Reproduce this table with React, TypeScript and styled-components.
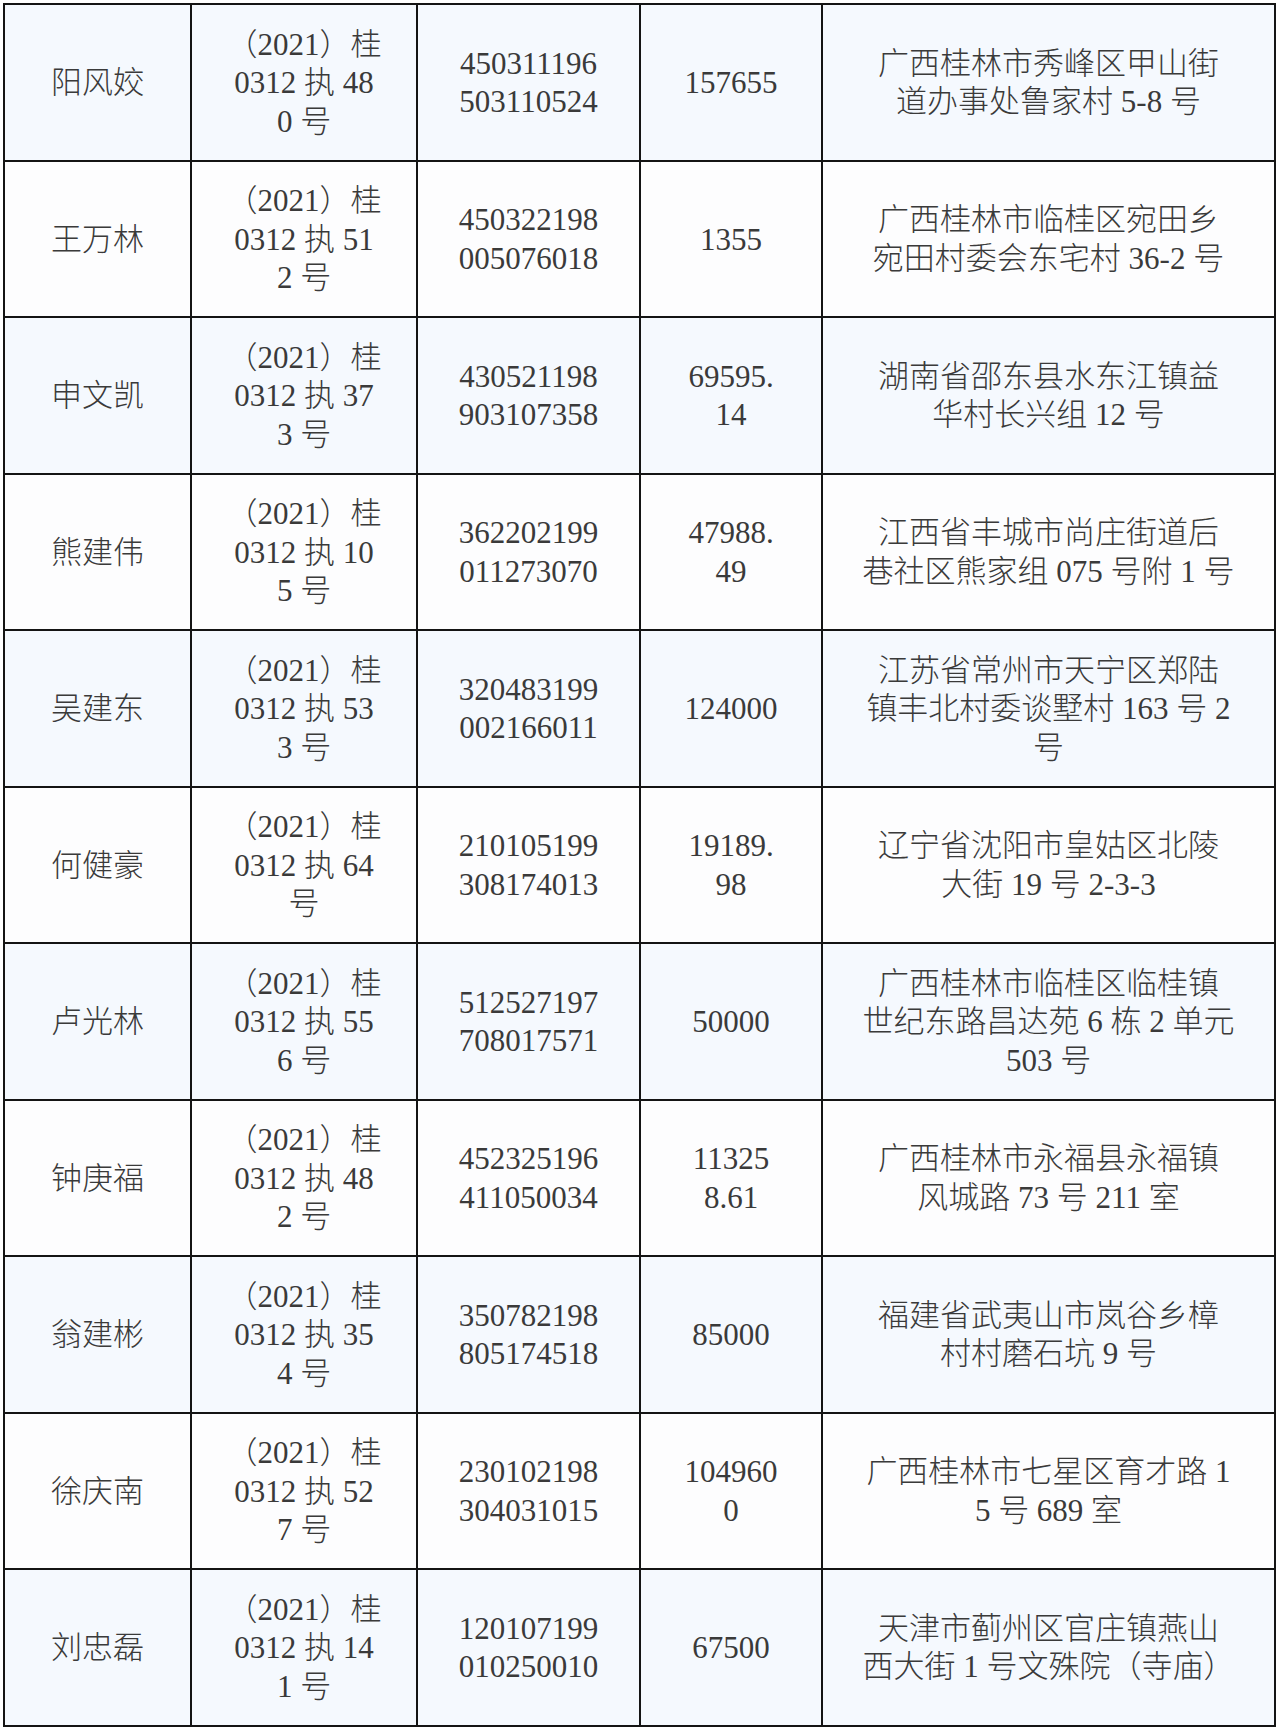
import React from "react";
import styled, { createGlobalStyle } from "styled-components";

const GlobalStyle = createGlobalStyle`
  html, body {
    margin: 0;
    padding: 0;
    background: #ffffff;
  }
  body {
    font-family: "Liberation Serif", "Noto Sans CJK SC", serif;
  }
`;

const Page = styled.div`
  padding: 3px 0 0 3px;
`;

const Table = styled.table`
  border-collapse: collapse;
  table-layout: fixed;
  width: 1273px;
  font-family: "Liberation Serif", "Noto Sans CJK SC", serif;
  font-size: 31px;
  font-weight: 300;
  line-height: 38.5px;
  color: #3a3a3a;
`;

const Col = styled.col<{ $w: number }>`
  width: ${(p) => p.$w}px;
`;

const Row = styled.tr<{ $alt: boolean }>`
  height: 156.5px;
  background: ${(p) => (p.$alt ? "#f5f9fe" : "#fdfdfe")};
`;

const Cell = styled.td`
  border: 2px solid #141414;
  text-align: center;
  vertical-align: middle;
  padding: 2px 0 0 0;
  white-space: nowrap;
`;

const Line = styled.div`
  display: block;
`;

type Entry = {
  name: string;
  caseNo: string[];
  id: string[];
  amount: string[];
  addr: string[];
};

const columns = [187, 226, 223, 182, 453];

const data: Entry[] = [
  {
    name: "阳风姣",
    caseNo: ["（2021）桂", "0312 执 48", "0 号"],
    id: ["450311196", "503110524"],
    amount: ["157655"],
    addr: ["广西桂林市秀峰区甲山街", "道办事处鲁家村 5-8 号"],
  },
  {
    name: "王万林",
    caseNo: ["（2021）桂", "0312 执 51", "2 号"],
    id: ["450322198", "005076018"],
    amount: ["1355"],
    addr: ["广西桂林市临桂区宛田乡", "宛田村委会东宅村 36-2 号"],
  },
  {
    name: "申文凯",
    caseNo: ["（2021）桂", "0312 执 37", "3 号"],
    id: ["430521198", "903107358"],
    amount: ["69595.", "14"],
    addr: ["湖南省邵东县水东江镇益", "华村长兴组 12 号"],
  },
  {
    name: "熊建伟",
    caseNo: ["（2021）桂", "0312 执 10", "5 号"],
    id: ["362202199", "011273070"],
    amount: ["47988.", "49"],
    addr: ["江西省丰城市尚庄街道后", "巷社区熊家组 075 号附 1 号"],
  },
  {
    name: "吴建东",
    caseNo: ["（2021）桂", "0312 执 53", "3 号"],
    id: ["320483199", "002166011"],
    amount: ["124000"],
    addr: ["江苏省常州市天宁区郑陆", "镇丰北村委谈墅村 163 号 2", "号"],
  },
  {
    name: "何健豪",
    caseNo: ["（2021）桂", "0312 执 64", "号"],
    id: ["210105199", "308174013"],
    amount: ["19189.", "98"],
    addr: ["辽宁省沈阳市皇姑区北陵", "大街 19 号 2-3-3"],
  },
  {
    name: "卢光林",
    caseNo: ["（2021）桂", "0312 执 55", "6 号"],
    id: ["512527197", "708017571"],
    amount: ["50000"],
    addr: ["广西桂林市临桂区临桂镇", "世纪东路昌达苑 6 栋 2 单元", "503 号"],
  },
  {
    name: "钟庚福",
    caseNo: ["（2021）桂", "0312 执 48", "2 号"],
    id: ["452325196", "411050034"],
    amount: ["11325", "8.61"],
    addr: ["广西桂林市永福县永福镇", "风城路 73 号 211 室"],
  },
  {
    name: "翁建彬",
    caseNo: ["（2021）桂", "0312 执 35", "4 号"],
    id: ["350782198", "805174518"],
    amount: ["85000"],
    addr: ["福建省武夷山市岚谷乡樟", "村村磨石坑 9 号"],
  },
  {
    name: "徐庆南",
    caseNo: ["（2021）桂", "0312 执 52", "7 号"],
    id: ["230102198", "304031015"],
    amount: ["104960", "0"],
    addr: ["广西桂林市七星区育才路 1", "5 号 689 室"],
  },
  {
    name: "刘忠磊",
    caseNo: ["（2021）桂", "0312 执 14", "1 号"],
    id: ["120107199", "010250010"],
    amount: ["67500"],
    addr: ["天津市蓟州区官庄镇燕山", "西大街 1 号文殊院（寺庙）"],
  },
];

const Lines: React.FC<{ lines: string[] }> = ({ lines }) => (
  <>
    {lines.map((l, i) => (
      <Line key={i}>{l}</Line>
    ))}
  </>
);

export default function App() {
  return (
    <>
      <GlobalStyle />
      <Page>
        <Table>
          <colgroup>
            {columns.map((w, i) => (
              <Col key={i} $w={w} />
            ))}
          </colgroup>
          <tbody>
            {data.map((d, i) => (
              <Row key={i} $alt={i % 2 === 0}>
                <Cell>{d.name}</Cell>
                <Cell>
                  <Lines lines={d.caseNo} />
                </Cell>
                <Cell>
                  <Lines lines={d.id} />
                </Cell>
                <Cell>
                  <Lines lines={d.amount} />
                </Cell>
                <Cell>
                  <Lines lines={d.addr} />
                </Cell>
              </Row>
            ))}
          </tbody>
        </Table>
      </Page>
    </>
  );
}
